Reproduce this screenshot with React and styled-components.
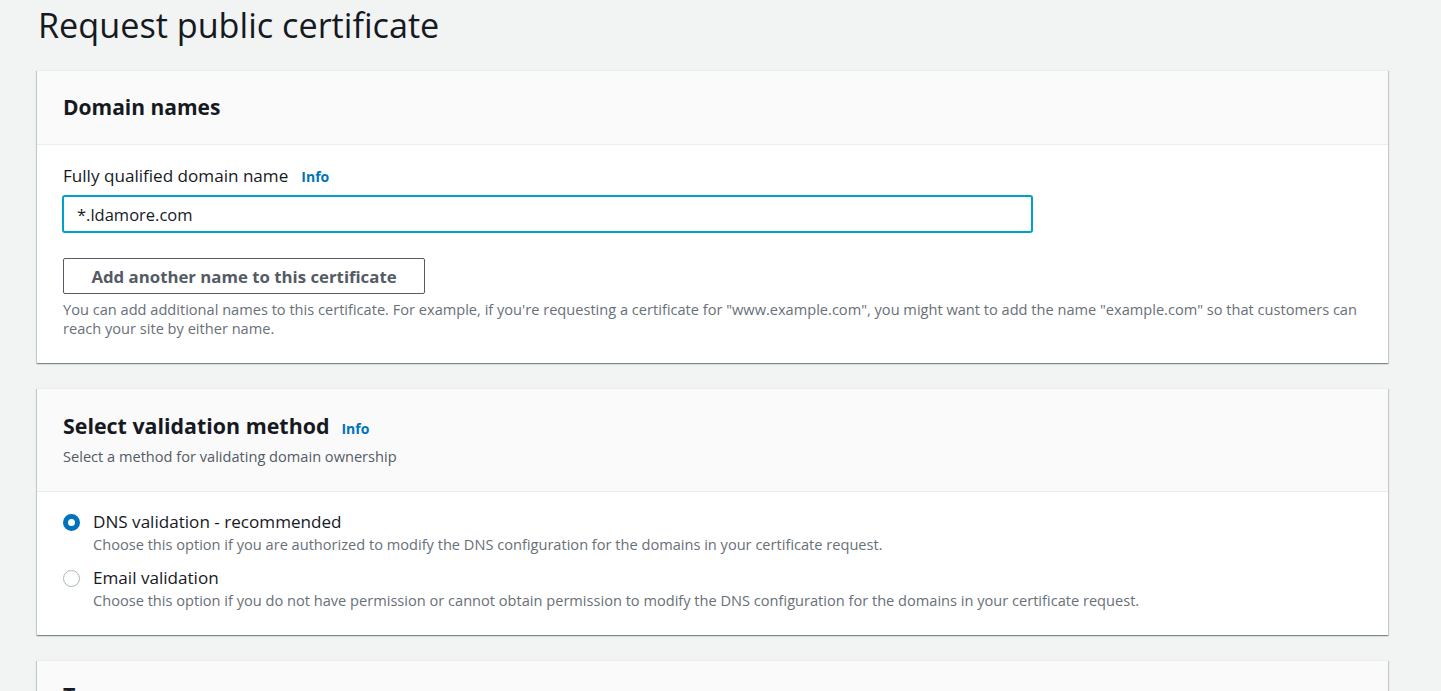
import React from "react";
import styled, { createGlobalStyle } from "styled-components";

const Global = createGlobalStyle`
  html, body { margin: 0; padding: 0; background: #f2f3f3; }
  body { font-family: "Open Sans", "Noto Sans", Arial, sans-serif; color: #16191f; }
  * { box-sizing: border-box; }
`;

const Page = styled.div`
  width: 1441px;
  height: 691px;
  overflow: hidden;
  padding: 5px 0 0 37px;
`;

const Column = styled.div`
  width: 1351px;
  display: flex;
  flex-direction: column;
  gap: 25px;
`;

const Title = styled.h1`
  margin: 0 0 0 1px;
  font-size: 34.2px;
  line-height: 40px;
  font-weight: 400;
  color: #16191f;
  height: 40px;
`;

const Card = styled.section`
  background: #fff;
  border-top: 1px solid #eaeded;
  box-shadow: 0 1px 1px 0 rgba(0, 28, 36, 0.3), 1px 1px 1px 0 rgba(0, 28, 36, 0.15),
    -1px 1px 1px 0 rgba(0, 28, 36, 0.15);
`;

const Header = styled.header`
  background: #fafafa;
  border-bottom: 1px solid #eaeded;
  padding: ${(p) => p.$pad || "24px 26px 25px"};
`;

const HeadRow = styled.div`
  display: flex;
  align-items: baseline;
  gap: 12px;
`;

const H2 = styled.h2`
  margin: 0;
  font-size: ${(p) => p.$size || 21}px;
  line-height: ${(p) => p.$lh || 24}px;
  font-weight: 700;
  color: #16191f;
`;

const Info = styled.a`
  font-size: 14px;
  font-weight: 700;
  color: #0073bb;
  text-decoration: none;
  cursor: pointer;
`;

const HeadDesc = styled.div`
  margin-top: 5px;
  font-size: 14.6px;
  line-height: 20px;
  color: #545b64;
`;

const Body = styled.div`
  padding: ${(p) => p.$pad || "20px 25px 25px"};
  display: flex;
  flex-direction: column;
`;

const LabelRow = styled.div`
  display: flex;
  align-items: baseline;
  gap: 13px;
  height: 22px;
  padding-left: 1px;
`;

const Label = styled.label`
  font-size: 17.1px;
  line-height: 22px;
  color: #16191f;
`;

const Input = styled.input`
  margin-top: 8px;
  width: 971px;
  height: 38px;
  border: 2px solid #00a1c9;
  border-radius: 3px;
  padding: 0 13px;
  font-family: inherit;
  font-size: 16.5px;
  color: #16191f;
  outline: none;
  background: #fff;
`;

const Button = styled.button`
  margin: 25px 0 0 1px;
  width: 362px;
  height: 36px;
  background: #fff;
  border: 1px solid #545b64;
  border-radius: 2px;
  font-family: inherit;
  font-size: 16.8px;
  font-weight: 700;
  color: #545b64;
  cursor: pointer;
`;

const Help = styled.p`
  margin: 6px 0 0 1px;
  font-size: 14.6px;
  line-height: 19px;
  color: #687078;
  max-width: 1300px;
`;

const Options = styled.div`
  display: flex;
  flex-direction: column;
  gap: 13px;
`;

const Option = styled.div`
  display: grid;
  grid-template-columns: 17px 1fr;
  column-gap: 13px;
  padding-left: 1px;
`;

const Radio = styled.span`
  width: 17px;
  height: 17px;
  margin-top: 3px;
  border-radius: 50%;
  background: #fff;
  border: ${(p) => (p.$checked ? "5px solid #0073bb" : "1.5px solid #aab7b8")};
`;

const OptText = styled.div`
  display: flex;
  flex-direction: column;
`;

const OptLabel = styled.div`
  font-size: 17.1px;
  line-height: 22px;
  color: #16191f;
`;

const OptDesc = styled.div`
  margin-top: 1px;
  font-size: 14.6px;
  line-height: 20px;
  color: #687078;
`;

export default function App() {
  const options = [
    {
      label: "DNS validation - recommended",
      desc: "Choose this option if you are authorized to modify the DNS configuration for the domains in your certificate request.",
      checked: true,
    },
    {
      label: "Email validation",
      desc: "Choose this option if you do not have permission or cannot obtain permission to modify the DNS configuration for the domains in your certificate request.",
      checked: false,
    },
  ];
  return (
    <>
      <Global />
      <Page>
        <Column>
          <Title>Request public certificate</Title>
          <Card>
            <Header>
              <H2>Domain names</H2>
            </Header>
            <Body>
              <LabelRow>
                <Label>Fully qualified domain name</Label>
                <Info>Info</Info>
              </LabelRow>
              <Input defaultValue="*.ldamore.com" />
              <Button>Add another name to this certificate</Button>
              <Help>
                You can add additional names to this certificate. For example, if you're requesting a
                certificate for "www.example.com", you might want to add the name "example.com" so
                that customers can reach your site by either name.
              </Help>
            </Body>
          </Card>
          <Card>
            <Header $pad="22px 26px 25px">
              <HeadRow>
                <H2 $size={21.4} $lh={30}>Select validation method</H2>
                <Info>Info</Info>
              </HeadRow>
              <HeadDesc>Select a method for validating domain ownership</HeadDesc>
            </Header>
            <Body $pad="19px 25px 25px">
              <Options>
                {options.map((o) => (
                  <Option key={o.label}>
                    <Radio $checked={o.checked} />
                    <OptText>
                      <OptLabel>{o.label}</OptLabel>
                      <OptDesc>{o.desc}</OptDesc>
                    </OptText>
                  </Option>
                ))}
              </Options>
            </Body>
          </Card>
          <Card>
            <Header $pad="19px 26px 25px">
              <H2 $size={21.4} $lh={30}>Tags</H2>
            </Header>
          </Card>
        </Column>
      </Page>
    </>
  );
}
